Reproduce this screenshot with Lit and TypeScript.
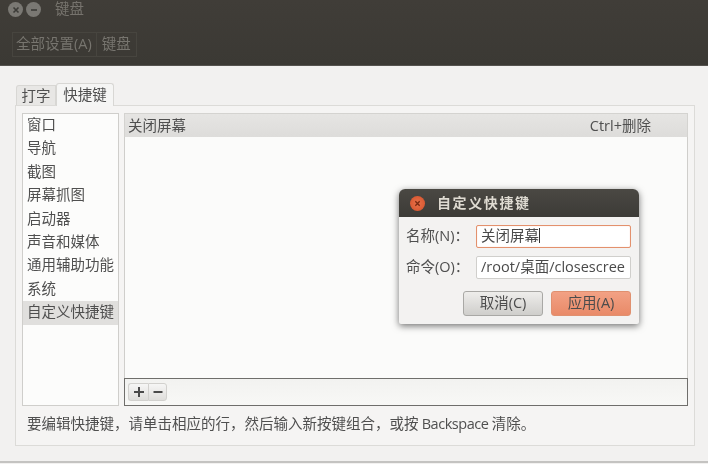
import { LitElement, html, css } from "lit";
import { customElement } from "lit/decorators.js";

@customElement("app-root")
export class AppRoot extends LitElement {
  static styles = css`
    :host { display: block; width: 708px; height: 464px; position: relative; overflow: hidden; background: #f2f1f0;
      font-family: "Open Sans", "Noto Sans CJK SC", sans-serif; font-size: 14.5px; color: #4f4f4f; filter: blur(0.35px); }
    .top { height: 66px; box-sizing: border-box; background: linear-gradient(#403d38, #3b3934); padding: 0 0 0 8px; border-bottom: 1px solid #55534f; }
    .titlebar { display: flex; align-items: center; height: 19px; gap: 3px; }
    .wbtn { width: 15px; height: 15px; border-radius: 50%; background: #7a7873; color: #3c3b37; display: flex; align-items: center; justify-content: center; }
    .wtitle { margin-left: 11px; color: #76736d; font-size: 14.5px; line-height: 16px; position: relative; top: -1px; }
    .crumbs { display: flex; margin: 13px 0 0 4px; height: 25px; width: 125px; border: 1px solid #47453f; box-sizing: border-box; color: #77756f; font-size: 14.5px; line-height: 20px; }
    .crumbs span { display: flex; align-items: center; padding: 0 4px 2px 3px; }
    .crumbs span + span { border-left: 1px solid #47453f; padding-left: 5px; }
    .content { height: 397px; box-sizing: border-box; padding: 17px 13px 0 15px; border-bottom: 2px solid #c4c3c1; }
    .tabs { display: flex; height: 22px; padding-left: 1px; align-items: flex-end; }
    .tab { box-sizing: border-box; height: 20px; width: 40px; padding-bottom: 3px; display: flex; align-items: center; justify-content: center; background: #e8e7e5; border: 1px solid #d8d7d4; border-bottom: 0; border-radius: 3px 0 0 0; }
    .tab.on { height: 23px; width: 58px; padding-bottom: 4px; background: #f5f5f4; border-radius: 3px 3px 0 0; margin-bottom: -1px; position: relative; z-index: 1; }
    .panel { box-sizing: border-box; height: 341px; background: #f5f4f3; border: 1px solid #dcdbd8; padding: 7px 6px 0 6px; }
    .main { display: flex; gap: 5px; height: 293px; }
    .side { box-sizing: border-box; width: 97px; background: #fcfcfb; border: 1px solid #cfcecb; }
    .side div { box-sizing: border-box; height: 23.4px; line-height: 21.4px; padding: 0 0 2px 4px; white-space: nowrap; }
    .side .sel { background: #e0dfdd; }
    .right { flex: 1; display: flex; flex-direction: column; }
    .hdr { box-sizing: border-box; height: 24px; display: flex; justify-content: space-between; align-items: center; padding: 0 36px 3px 3px;
      background: linear-gradient(#e6e5e3, #dddcda); border: 1px solid #d4d3d0; border-bottom: 0; }
    .list { flex: 1; background: #fbfbfa; border-left: 1px solid #cfcecb; border-right: 1px solid #cfcecb; }
    .tools { box-sizing: border-box; height: 28px; border: 1.5px solid #6f6e6b; background: linear-gradient(#f2f2f0, #f8f8f6); padding: 3.5px 3px; display: flex; }
    .tools button { box-sizing: border-box; width: 20px; height: 18px; padding: 0; border: 1px solid #d2d1ce; background: linear-gradient(#f6f6f5, #dfdedb); display: flex; align-items: center; justify-content: center; }
    .tools button:first-child { border-radius: 3px 0 0 3px; border-right: 0; }
    .tools button:last-child { border-radius: 0 3px 3px 0; width: 19px; }
    .help { margin: 8px 0 0 5px; line-height: 20px; white-space: nowrap; font-size: 14.5px; word-spacing: -0.6px; }
    .help span { letter-spacing: -0.45px; }
    .dialog { position: absolute; left: 399px; top: 189px; width: 240px; height: 135px; box-sizing: border-box; background: #f3f2f1; border-radius: 6px 6px 2px 2px;
      box-shadow: 0 2px 7px rgba(0,0,0,0.55); overflow: hidden; }
    .dtitle { height: 28px; background: linear-gradient(#4a4843, #3c3b37); display: flex; align-items: center; padding: 0 0 3px 11px; box-sizing: border-box; color: #dfdbd2; font-weight: 600; font-size: 14px; letter-spacing: 1.6px; }
    .dclose { width: 15px; height: 15px; border-radius: 50%; background: radial-gradient(#e8724a, #d4502a); margin-right: 12px; flex: none; display: flex; align-items: center; justify-content: center; position: relative; top: 1.5px; }
    .dbody { padding: 8px 8px 0 7px; }
    .row { display: flex; align-items: center; justify-content: space-between; height: 23px; margin-bottom: 8px; }
    .row label { white-space: nowrap; padding-bottom: 4px; }
    .input { box-sizing: border-box; width: 155px; height: 23px; background: #fff; border: 1px solid #d0cfcc; border-radius: 2px; padding: 0 4px; line-height: 20px; white-space: nowrap; overflow: hidden; color: #4a4a4a; }
    .input.focus { border-color: #e3916d; box-shadow: inset 0 0 1px #f0b9a0; }
    .caret { display: inline-block; width: 1px; height: 15px; background: #333; vertical-align: -2px; }
    .btns { display: flex; justify-content: flex-end; gap: 8px; margin-top: 12px; }
    .btn { box-sizing: border-box; width: 80px; height: 25px; padding-bottom: 4px; border: 1px solid #a9a8a5; border-radius: 3px; background: linear-gradient(#eeedeb, #cfcecb); display: flex; align-items: center; justify-content: center; color: #4c4c4c; }
    .btn.ok { background: linear-gradient(#f2a184, #e98a68); border-color: #e0906f; }
  `;

  render() {
    const items = ["窗口", "导航", "截图", "屏幕抓图", "启动器", "声音和媒体", "通用辅助功能", "系统", "自定义快捷键"];
    const x = (c: string, s = 8) => html`<svg width=${s} height=${s} viewBox="0 0 8 8"><path d="M1.5 1.5l5 5M6.5 1.5l-5 5" stroke=${c} stroke-width="1.6" fill="none"/></svg>`;
    return html`
      <div class="top">
        <div class="titlebar">
          <span class="wbtn">${x("#3c3b37")}</span>
          <span class="wbtn"><svg width="8" height="8" viewBox="0 0 8 8"><path d="M1 4h6" stroke="#3c3b37" stroke-width="1.6"/></svg></span>
          <span class="wtitle">键盘</span>
        </div>
        <div class="crumbs"><span>全部设置(A)</span><span>键盘</span></div>
      </div>
      <div class="content">
        <div class="tabs"><div class="tab">打字</div><div class="tab on">快捷键</div></div>
        <div class="panel">
          <div class="main">
            <div class="side">${items.map((t, i) => html`<div class=${i === 8 ? "sel" : ""}>${t}</div>`)}</div>
            <div class="right">
              <div class="hdr"><span>关闭屏幕</span><span>Ctrl+删除</span></div>
              <div class="list"></div>
              <div class="tools">
                <button><svg width="12" height="12" viewBox="0 0 12 12"><path d="M6 1v10M1 6h10" stroke="#4a4a4a" stroke-width="2"/></svg></button>
                <button><svg width="12" height="12" viewBox="0 0 12 12"><path d="M1.5 6h9" stroke="#4a4a4a" stroke-width="2"/></svg></button>
              </div>
            </div>
          </div>
          <div class="help">要编辑快捷键，请单击相应的行，然后输入新按键组合，或按 <span>Backspace</span> 清除。</div>
        </div>
      </div>
      <div class="dialog">
        <div class="dtitle"><span class="dclose">${x("#7a2a12", 7)}</span>自定义快捷键</div>
        <div class="dbody">
          <div class="row"><label>名称(N)：</label><div class="input focus">关闭屏幕<span class="caret"></span></div></div>
          <div class="row"><label>命令(O)：</label><div class="input">/root/桌面/closescree</div></div>
          <div class="btns"><div class="btn">取消(C)</div><div class="btn ok">应用(A)</div></div>
        </div>
      </div>
    `;
  }
}
